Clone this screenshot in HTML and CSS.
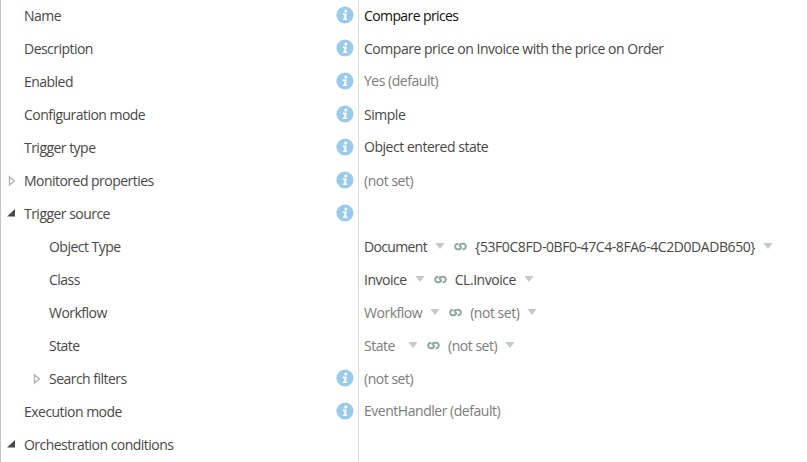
FILE: index.html
```
<!DOCTYPE html>
<html lang="en">

<head>
    <meta charset="utf-8">
    <title>Configuration</title>
    <link rel="stylesheet" href="styles.css">
</head>

<body>
    <svg class="defs">
        <symbol id="info" viewBox="0 0 18 18">
            <circle cx="9" cy="9" r="8.6" fill="#9ccbe9" />
            <circle cx="9.8" cy="5" r="1.5" fill="#fff" />
            <path d="M6.8 7.5h3.9l-.7 5.1h1.2v1.5H7v-1.5h1.1l.4-3.6H6.8z" fill="#fff" />
        </symbol>
        <symbol id="closed" viewBox="0 0 8 12">
            <path d="M1.5 1.8v8.2L6.3 6z" fill="#fff" stroke="#b3b3b3" stroke-width="1.4" />
        </symbol>
        <symbol id="open" viewBox="0 0 8 8">
            <path d="M8 0v7.5H0z" fill="#484848" />
        </symbol>
        <symbol id="drop" viewBox="0 0 10 6">
            <path d="M.3 0h9.2L5 6z" fill="#c8c8c8" />
        </symbol>
        <symbol id="link" viewBox="0 0 13 9">
            <path d="M4.2 1.7C.2 1.5.2 7.2 3.7 7.2c2.2 0 3.4-.6 3.4-1.8S5.4 4.1 5.4 3.1s1.3-1.4 3.7-1.4c3.7 0 3.6 5.7-.4 5.5" fill="none" stroke="#8eaaa0" stroke-width="2" />
        </symbol>
    </svg>
    <div class="grid">
        <div class="row">
            <div class="name"><span class="label">Name</span><svg class="info"><use href="#info" /></svg></div>
            <div class="value strong"><span>Compare prices</span></div>
        </div>
        <div class="row">
            <div class="name"><span class="label">Description</span><svg class="info"><use href="#info" /></svg></div>
            <div class="value"><span>Compare price on Invoice with the price on Order</span></div>
        </div>
        <div class="row">
            <div class="name"><span class="label">Enabled</span><svg class="info"><use href="#info" /></svg></div>
            <div class="value unset"><span class="raised">Yes (default)</span></div>
        </div>
        <div class="row">
            <div class="name"><span class="label">Configuration mode</span><svg class="info"><use href="#info" /></svg></div>
            <div class="value"><span>Simple</span></div>
        </div>
        <div class="row">
            <div class="name"><span class="label">Trigger type</span><svg class="info"><use href="#info" /></svg></div>
            <div class="value"><span class="raised">Object entered state</span></div>
        </div>
        <div class="row">
            <div class="name"><svg class="closed"><use href="#closed" /></svg><span class="label">Monitored properties</span><svg class="info"><use href="#info" /></svg></div>
            <div class="value unset"><span>(not set)</span></div>
        </div>
        <div class="row">
            <div class="name"><svg class="open"><use href="#open" /></svg><span class="label">Trigger source</span><svg class="info"><use href="#info" /></svg></div>
            <div class="value"></div>
        </div>
        <div class="row">
            <div class="name child"><span class="label">Object Type</span></div>
            <div class="value"><span class="doc">Document</span><svg class="drop"><use href="#drop" /></svg><svg class="link"><use href="#link" /></svg><span class="guid">{53F0C8FD-0BF0-47C4-8FA6-4C2D0DADB650}</span><svg class="drop"><use href="#drop" /></svg></div>
        </div>
        <div class="row">
            <div class="name child"><span class="label">Class</span></div>
            <div class="value"><span>Invoice</span><svg class="drop"><use href="#drop" /></svg><svg class="link"><use href="#link" /></svg><span>CL.Invoice</span><svg class="drop"><use href="#drop" /></svg></div>
        </div>
        <div class="row">
            <div class="name child"><span class="label">Workflow</span></div>
            <div class="value unset"><span>Workflow</span><svg class="drop"><use href="#drop" /></svg><svg class="link"><use href="#link" /></svg><span>(not set)</span><svg class="drop"><use href="#drop" /></svg></div>
        </div>
        <div class="row">
            <div class="name child"><span class="label">State</span></div>
            <div class="value unset"><span class="short">State</span><svg class="drop"><use href="#drop" /></svg><svg class="link"><use href="#link" /></svg><span>(not set)</span><svg class="drop"><use href="#drop" /></svg></div>
        </div>
        <div class="row">
            <div class="name child"><svg class="closed"><use href="#closed" /></svg><span class="label">Search filters</span><svg class="info"><use href="#info" /></svg></div>
            <div class="value unset"><span>(not set)</span></div>
        </div>
        <div class="row">
            <div class="name"><span class="label">Execution mode</span><svg class="info"><use href="#info" /></svg></div>
            <div class="value unset"><span class="raised">EventHandler (default)</span></div>
        </div>
        <div class="row">
            <div class="name"><svg class="open"><use href="#open" /></svg><span class="label">Orchestration conditions</span></div>
            <div class="value"></div>
        </div>
    </div>
</body>

</html>
```
FILE: styles.css
```
* {
    box-sizing: border-box;
    padding: 0;
    margin: 0;
}

body {
    background: #fff;
    font-family: "Open Sans", "Noto Sans", sans-serif;
    font-size: 14px;
    letter-spacing: -0.47px;
    line-height: 20px;
    color: #484848;
    overflow: hidden;
}

.defs {
    display: none;
}

.grid {
    height: 463px;
    margin-top: -1px;
    border-left: 1px solid #c4c4c4;
}

.row {
    display: flex;
    height: 33px;
}

.row:last-child {
    height: 34px;
}

.name {
    display: flex;
    align-items: center;
    width: 358px;
    padding-left: 6px;
    padding-right: 4px;
    border-right: 1px solid #dcdcdc;
}

.row:last-child .name {
    padding-bottom: 1px;
}

.child {
    padding-left: 31px;
}

.label {
    letter-spacing: -0.53px;
}

.name .label:first-child {
    margin-left: 17px;
}

.value {
    display: flex;
    align-items: center;
    padding-left: 5px;
    white-space: nowrap;
}

.raised {
    padding-bottom: 2px;
}

.strong {
    color: #111;
    letter-spacing: -0.6px;
}

.unset {
    color: #7c7c7c;
}

.info {
    width: 18px;
    height: 18px;
    margin-left: auto;
    margin-bottom: 2px;
}

.closed {
    width: 8px;
    height: 12px;
    margin-right: 8px;
    margin-left: 1px;
}

.open {
    width: 8px;
    height: 8px;
    margin-right: 9px;
    margin-bottom: 1px;
}

.drop {
    width: 10px;
    height: 6px;
    margin: 0 9px 2px 8px;
}

.link {
    width: 13px;
    height: 9px;
    margin-right: 8px;
}

.doc {
    letter-spacing: -0.65px;
}

.guid {
    letter-spacing: -0.43px;
}

.short {
    width: 44px;
    margin-right: -8px;
}
```
